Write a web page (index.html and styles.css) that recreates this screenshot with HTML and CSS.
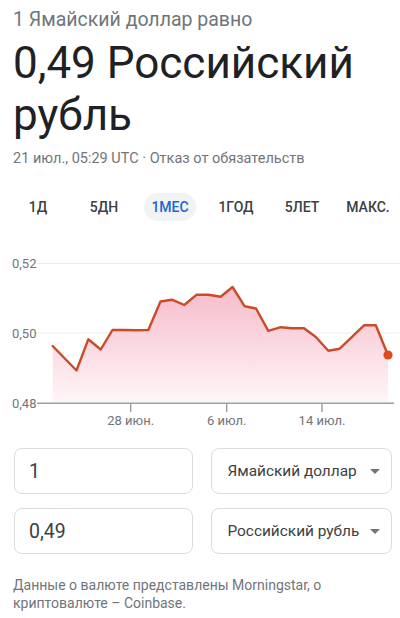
FILE: index.html
```html
<!DOCTYPE html>
<html lang="ru">
<head>
<meta charset="utf-8">
<title>Конвертер валют</title>
<link rel="stylesheet" href="styles.css">
</head>
<body>
<div class="header">
  <div class="lead">1 Ямайский доллар равно</div>
  <div class="rate">0,49 Российский рубль</div>
  <div class="meta">21 июл., 05:29 UTC · Отказ от обязательств</div>
</div>
<div class="tabs">
  <div class="tab"><span>1Д</span></div>
  <div class="tab"><span>5ДН</span></div>
  <div class="tab"><span class="active">1МЕС</span></div>
  <div class="tab"><span>1ГОД</span></div>
  <div class="tab"><span>5ЛЕТ</span></div>
  <div class="tab"><span>МАКС.</span></div>
</div>
<svg class="chart" width="400" height="185" viewBox="0 250 400 185" xmlns="http://www.w3.org/2000/svg">
  <defs>
    <linearGradient id="fill" x1="0" y1="287" x2="0" y2="403" gradientUnits="userSpaceOnUse">
      <stop offset="0" stop-color="#f6bccb"/>
      <stop offset="1" stop-color="#fff6f8"/>
    </linearGradient>
  </defs>
  <line class="grid" x1="38" y1="263.5" x2="400" y2="263.5"/>
  <line class="grid" x1="38" y1="333" x2="400" y2="333"/>
  <polygon fill="url(#fill)" points="52.7,346 76.5,370.5 88.3,339.3 100.7,349.5 112.5,330 123.3,330 136.7,330.3 148.3,330 160.5,301.5 172,299.7 184.3,305 196.7,294.7 208.3,294.7 220.7,296.7 232.5,287 244.7,306.3 256,308.5 268.3,330.8 280.7,327.2 291.7,328.3 304,328.3 315.8,337 328.3,350.7 339.7,348.7 352.3,336.7 364,325.3 375.8,325.3 388,355.2 388,402 52.7,402"/>
  <polyline class="line" points="52.7,346 76.5,370.5 88.3,339.3 100.7,349.5 112.5,330 123.3,330 136.7,330.3 148.3,330 160.5,301.5 172,299.7 184.3,305 196.7,294.7 208.3,294.7 220.7,296.7 232.5,287 244.7,306.3 256,308.5 268.3,330.8 280.7,327.2 291.7,328.3 304,328.3 315.8,337 328.3,350.7 339.7,348.7 352.3,336.7 364,325.3 375.8,325.3 388,355.2"/>
  <circle class="dot" cx="388" cy="355" r="4.6"/>
  <line class="axis" x1="37" y1="403.3" x2="394" y2="403.3"/>
  <line class="axis" x1="130.7" y1="403" x2="130.7" y2="412"/>
  <line class="axis" x1="226.7" y1="403" x2="226.7" y2="412"/>
  <line class="axis" x1="322" y1="403" x2="322" y2="412"/>
  <text class="lbl" x="12" y="268">0,52</text>
  <text class="lbl" x="12" y="337.5">0,50</text>
  <text class="lbl" x="12" y="408">0,48</text>
  <text class="lbl mid" x="130.7" y="425">28 июн.</text>
  <text class="lbl mid" x="226.7" y="425">6 июл.</text>
  <text class="lbl mid" x="322" y="425">14 июл.</text>
</svg>
<div class="converter">
  <div class="row">
    <div class="field">1</div>
    <div class="select"><span>Ямайский доллар</span><i class="caret"></i></div>
  </div>
  <div class="row">
    <div class="field">0,49</div>
    <div class="select"><span>Российский рубль</span><i class="caret"></i></div>
  </div>
</div>
<p class="source">Данные о валюте представлены Morningstar, о криптовалюте – Coinbase.</p>
</body>
</html>
```

FILE: styles.css
```css
* { box-sizing: border-box; }
html, body { margin: 0; padding: 0; background: #fff; }
body {
  font-family: Roboto, "Noto Sans", "Liberation Sans", sans-serif;
  color: #202124;
  width: 400px;
}
.header { padding: 8px 13px 0; }
.lead {
  font-size: 19.5px;
  line-height: 24px;
  color: #70757a;
}
.rate {
  margin-top: 5px;
  font-size: 44px;
  line-height: 52px;
  color: #202124;
}
.meta {
  margin-top: 8px;
  font-size: 14.5px;
  line-height: 20px;
  color: #70757a;
}
.tabs {
  display: grid;
  grid-template-columns: repeat(6, 66px);
  padding-left: 5px;
  margin-top: 24px;
}
.tab {
  display: flex;
  justify-content: center;
}
.tab span {
  display: block;
  height: 28px;
  line-height: 28px;
  padding: 0 7px;
  border-radius: 14px;
  font-size: 14px;
  font-weight: 500;
  color: #3c4043;
  white-space: nowrap;
}
.tab span.active {
  background: #f1f3f4;
  color: #1967d2;
}
.chart {
  display: block;
  margin-top: 29px;
}
.grid { stroke: #ececec; stroke-width: 1; }
.axis { stroke: #9aa0a6; stroke-width: 1.5; }
.line {
  fill: none;
  stroke: #cc4b27;
  stroke-width: 2.4;
  stroke-linejoin: round;
  stroke-linecap: round;
}
.dot { fill: #e0481f; }
.lbl {
  font-family: Roboto, "Noto Sans", sans-serif;
  font-size: 13px;
  fill: #70757a;
}
.mid { text-anchor: middle; }
.converter {
  margin-top: 13px;
  padding: 0 8px 0 14px;
  display: flex;
  flex-direction: column;
  gap: 14px;
}
.row {
  display: flex;
  gap: 18px;
}
.field, .select {
  height: 46px;
  border: 1px solid #dadce0;
  border-radius: 8px;
  display: flex;
  align-items: center;
}
.field {
  width: 180px;
  padding-left: 14px;
  font-size: 19.5px;
  color: #3c4043;
}
.select {
  width: 181px;
  padding: 0 11px 0 15px;
  justify-content: space-between;
  font-size: 15.4px;
  color: #3c4043;
}
.select span { white-space: nowrap; }
.caret {
  width: 0;
  height: 0;
  border-left: 5px solid transparent;
  border-right: 5px solid transparent;
  border-top: 5px solid #70757a;
}
.source {
  margin: 22px 0 0;
  padding: 0 13px;
  font-size: 14px;
  line-height: 18px;
  color: #70757a;
}
```
